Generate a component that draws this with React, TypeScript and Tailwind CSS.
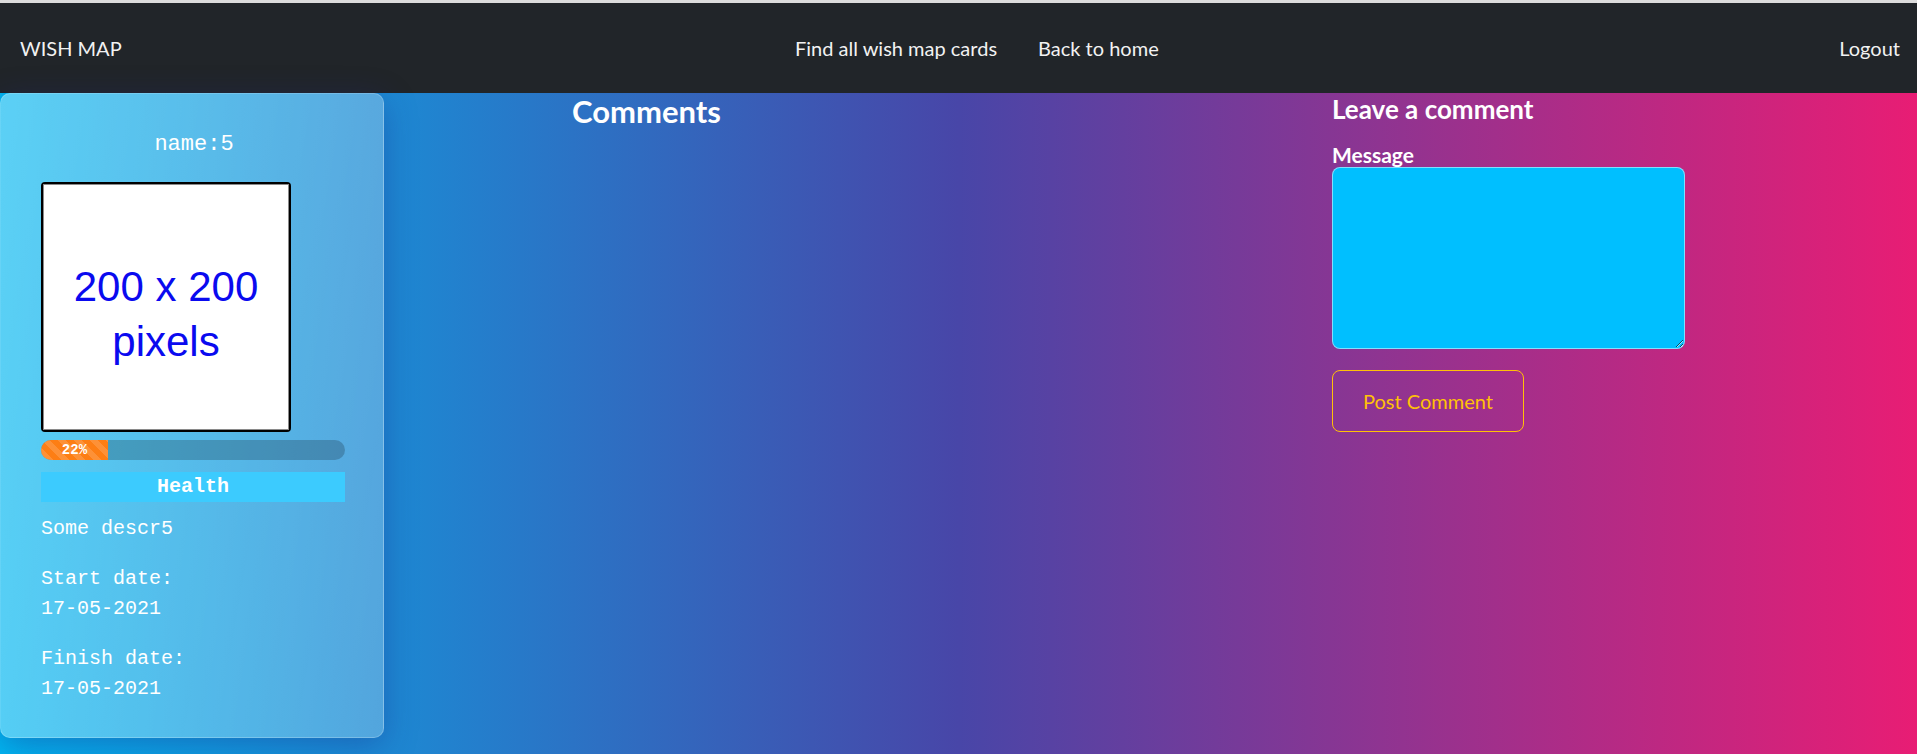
import React from "react";

const sans = "font-['Lato','Open_Sans',sans-serif]";
const mono = "font-['Liberation_Mono','Courier_New',monospace]";

function Card() {
  return (
    <div
      className={`w-[384px] shrink-0 self-start h-[645px] rounded-[10px] border border-white/20 bg-[linear-gradient(100deg,rgba(255,255,255,0.36),rgba(255,255,255,0.24))] shadow-[0_8px_32px_rgba(31,38,135,0.37)] pt-[36px] px-[40px] text-white ${mono}`}
    >
      <div className="text-center text-[22px] leading-[30px] pl-[4px]">name:5</div>
      <div className="mt-[22px] w-[250px] h-[250px] rounded-[4px] border-2 border-black bg-white">
        <div className="w-full h-full border border-[#8a8a8a] flex flex-col items-center justify-center pt-[14px] font-['Liberation_Sans',Arial,sans-serif] text-[42px] leading-[55px] text-[#0a0aef]">
          <div>200 x 200</div>
          <div>pixels</div>
        </div>
      </div>
      <div className="mt-[8px] w-[304px] h-[20px] rounded-full bg-black/20 overflow-hidden flex">
        <div className={`w-[22%] h-full bg-[#fd7e14] bg-[linear-gradient(45deg,rgba(255,255,255,.15)_25%,transparent_25%,transparent_50%,rgba(255,255,255,.15)_50%,rgba(255,255,255,.15)_75%,transparent_75%,transparent)] bg-[length:16px_16px] flex items-center justify-center text-[14px] font-bold leading-none text-white ${mono}`}>
          22%
        </div>
      </div>
      <div className="mt-[12px] w-[304px] h-[30px] bg-[#3ccbfe] flex items-center justify-center text-[20px] font-bold">
        Health
      </div>
      <div className="mt-[12px] text-[20px] leading-[30px]">
        <p className="mb-[20px]">Some descr5</p>
        <p className="mb-[20px]">
          Start date:
          <br />
          17-05-2021
        </p>
        <p>
          Finish date:
          <br />
          17-05-2021
        </p>
      </div>
    </div>
  );
}

export default function App() {
  return (
    <div className={`h-[754px] flex flex-col ${sans}`}>
      <div className="h-[3px] bg-[#dcdcdc]" />
      <nav className="h-[90px] bg-[#212529] flex items-center pl-[20px] pr-[17px] text-[20px] text-[#f2f2f2]">
        <div className="w-[775px]">WISH MAP</div>
        <div className="flex gap-[41px]">
          <span>Find all wish map cards</span>
          <span>Back to home</span>
        </div>
        <div className="ml-auto">Logout</div>
      </nav>
      <main className="flex-1 flex bg-[linear-gradient(to_right,#00b6f0,#4846a8_50%,#e81d74)]">
        <Card />
        <div className="w-[948px] shrink-0 pl-[188px]">
          <h2 className="text-[31px] leading-[1.2] font-bold text-white">Comments</h2>
        </div>
        <div className="flex-1 pt-[1px]">
          <h3 className="text-[26px] leading-[1.2] font-bold text-white">Leave a comment</h3>
          <label className="block mt-[18px] text-[21px] leading-[24px] font-bold text-white">Message</label>
          <textarea className="block w-[353px] h-[182px] rounded-[8px] border border-white/50 bg-[#00bfff] outline-none" />
          <button className="mt-[21px] w-[192px] h-[62px] rounded-[8px] border border-[#ffc107] text-[#ffc107] text-[20px]">
            Post Comment
          </button>
        </div>
      </main>
    </div>
  );
}
